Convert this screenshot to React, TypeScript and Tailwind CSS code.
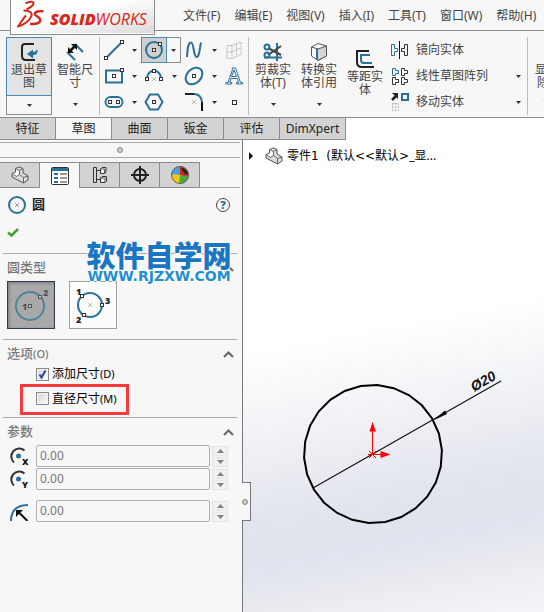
import React from "react";

const BLUE = "#2a7199";
const DARK = "#333333";

type SvgProps = { w: number; h: number; children: React.ReactNode; className?: string };

function Svg({ w, h, children, className }: SvgProps) {
  return (
    <svg width={w} height={h} viewBox={`0 0 ${w} ${h}`} fill="none" className={`shrink-0 ${className ?? ""}`} aria-hidden="true">
      {children}
    </svg>
  );
}

function Node({ x, y }: { x: number; y: number }) {
  return <rect x={x - 1.5} y={y - 1.5} width="3" height="3" fill="#fff" stroke={DARK} />;
}

function Caret() {
  return (
    <Svg w={5} h={3}>
      <path d="M0 0h5L2.500 3z" fill="#333" />
    </Svg>
  );
}

function PartIcon() {
  return (
    <Svg w={18} h={18}>
      <path d="M1 7.500 4.500 6V2.500L8 1l4 1.500V7l5 3v4l-4.500 3L1 11z" fill="#dcdcdc" stroke="#555" strokeLinejoin="round" />
      <path d="m5 3 3.500 1.500L12 2.500M8.500 4.500v4l4 3 4.500-1.500M12.500 11.500V17M8.500 8.500l-3 2L1 7.500" stroke="#666" />
      <path d="m5 3.500 3 1.500v3L5.500 9.500 2.500 8 5 6.500z" fill="#fff" opacity=".8" />
    </Svg>
  );
}

/* ---------- menu ---------- */

function Logo() {
  return (
    <div className="absolute top-0 left-[10px] flex h-[35px] w-[145px] items-center border border-t-0 border-[#8c8c8c] bg-linear-to-br from-white from-40% to-[#d9d9d9] pl-1.5 shadow-[inset_0_-1px_0_#fff]">
      <Svg w={27} h={30} className="mb-1">
        <path d="M8.500 3.200C12 1.800 17 1 16.500 3.200 16 5.500 12.500 8 9.500 9.300" stroke="#d8261c" strokeWidth="2" />
        <path d="M6.500 10.500C11 10.500 15.500 12 14.500 15.500 13 20.500 7 25 1 26.500 3.500 24 4.500 20 9 15.500" stroke="#d8261c" strokeWidth="2" strokeLinejoin="round" />
        <path d="M26.500 11.200C22.500 10.800 18 11.500 17.800 13.800 17.600 16 24 17.500 23.300 20.500 22.800 23.500 18 24.500 13 23.700" stroke="#d8261c" strokeWidth="2.400" />
      </Svg>
      <span className="ml-1.5 pt-1 font-['Open_Sans',sans-serif] text-base leading-4 text-[#d8261c] italic">
        <b className="font-extrabold">SOLID</b>
        <span>WORKS</span>
      </span>
    </div>
  );
}

const menus = ["文件(F)", "编辑(E)", "视图(V)", "插入(I)", "工具(T)", "窗口(W)", "帮助(H)"];

function MenuBar() {
  return (
    <header className="relative flex h-[31px] items-center border-b border-[#8c8c8c] pl-[183px]">
      <Logo />
      <nav className="flex gap-[14px] pt-0.5">
        {menus.map((m) => (
          <button key={m} type="button" className="leading-4 whitespace-nowrap">{m}</button>
        ))}
      </nav>
    </header>
  );
}

/* ---------- ribbon ---------- */

function BigTool({ icon, lines, caret = true }: { icon?: React.ReactNode; lines: string[]; caret?: boolean }) {
  return (
    <button type="button" className={`flex h-[78px] w-[46px] shrink-0 flex-col items-center ${caret ? "pt-1" : "pt-[11px]"}`}>
      <span className="flex h-[22px] shrink-0 items-center">{icon}</span>
      {lines.map((l) => (
        <span key={l} className="leading-[13px] whitespace-nowrap">{l}</span>
      ))}
      {caret && <span className="mt-3.5"><Caret /></span>}
    </button>
  );
}

function Divider() {
  return <div className="h-[78px] w-px shrink-0 bg-[#bcbcbc]" />;
}

const sketchTools: { name: string; caret?: boolean; active?: boolean; art: React.ReactNode }[] = [
  { name: "直线", caret: true, art: <><path d="M2 18 17 3" stroke={BLUE} strokeWidth="2" /><Node x={2} y={18} /><Node x={18} y={2} /></> },
  { name: "圆", caret: true, active: true, art: <><circle cx="10" cy="10" r="8" stroke={BLUE} strokeWidth="2" /><Node x={10} y={10} /><Node x={16} y={4} /></> },
  { name: "样条曲线", caret: true, art: <path d="M3 17C3.500 9 4 2.500 7 2.500S9.500 17 12.500 17 15.500 9 17 2.500" stroke={BLUE} strokeWidth="2" /> },
  { name: "基准面", art: <path d="M3 5.500h5l9-3.500v12.500l-9 4H3zM8 5.500v13M12.500 4v12.500M3 12h5l9-4" stroke="#b5b5b5" strokeDasharray="2 1" /> },
  { name: "边角矩形", caret: true, art: <><path d="M2 4.500h16v12H2z" stroke={BLUE} strokeWidth="2" /><Node x={10} y={10} /><Node x={18} y={4} /></> },
  { name: "圆弧", caret: true, art: <><path d="M3 13C3 2 17 2 17 13" stroke={BLUE} strokeWidth="2" /><path d="m8 11 4 4m0-4-4 4" stroke="#bbb" /><Node x={3} y={13} /><Node x={17} y={13} /><Node x={10} y={5} /></> },
  { name: "椭圆", caret: true, art: <><ellipse cx="10" cy="10" rx="9.500" ry="7" transform="rotate(-45 10 10)" stroke={BLUE} strokeWidth="2" /><Node x={10} y={10} /></> },
  { name: "文字", art: <path d="M8 2h3.500l5 14.500h2v1.500h-6v-1.500h2l-1.200-4H7l-1.200 4h2v1.500h-6v-1.500h2.200L8.500 3.500zM7.500 10.500h5L10 4z" stroke={BLUE} /> },
  { name: "直槽口", caret: true, art: <><rect x="1.500" y="5" width="17" height="10" rx="5" stroke={BLUE} strokeWidth="2" /><Node x={6} y={10} /><Node x={14} y={10} /></> },
  { name: "多边形", art: <><path d="M6 2.500h8l4.500 7.500L14 17.500H6L1.500 10z" stroke={BLUE} strokeWidth="2" /><Node x={10} y={10} /></> },
  { name: "圆角", caret: true, art: <><path d="M1 2h9" stroke="#222" strokeWidth="2" /><path d="M10 2q7 0 8 8" stroke={BLUE} strokeWidth="2" /><path d="M18 10v9" stroke="#111" strokeWidth="2" /><path d="m8 8 4 4m0-4-4 4" stroke="#bbb" /></> },
  { name: "点", art: <rect x="8.500" y="8.500" width="4" height="4" stroke={DARK} fill="#fff" /> },
];

function SketchGrid() {
  return (
    <div className="grid w-[148px] shrink-0 grid-cols-[40px_40px_40px_27px] grid-rows-3 pl-px">
      {sketchTools.map((t) => (
        <div key={t.name} className="flex h-[26px]">
          <button
            type="button"
            aria-label={t.name}
            className={`flex w-[26px] items-center justify-center ${t.active ? "border border-[#4a8bb5] bg-[#d0d0d0]" : ""}`}
          >
            <Svg w={20} h={20}>{t.art}</Svg>
          </button>
          {t.caret && (
            <button
              type="button"
              aria-label={`${t.name}选项`}
              className={`flex w-[14px] items-center justify-center ${t.active ? "border border-l-0 border-[#8c8c8c]" : ""}`}
            >
              <Caret />
            </button>
          )}
        </div>
      ))}
    </div>
  );
}

const patternTools = [
  {
    label: "镜向实体",
    caret: false,
    art: <><path d="M1.500 4.500h3v4h3v3h-3v4h-3z" stroke={BLUE} /><path d="M9.500 1v18" stroke="#111" /><path d="M17.500 4.500h-3v4h-3v3h3v4h3z" stroke={DARK} /></>,
  },
  {
    label: "线性草图阵列",
    caret: true,
    art: <><path d="M2.500 2.500h3v2h3v3h-3v2h-3z" stroke={BLUE} /><path d="M11.500 2.500h3v2h3v3h-3v2h-3zM2.500 11.500h3v2h3v3h-3v2h-3zM11.500 11.500h3v2h3v3h-3v2h-3z" stroke={DARK} /></>,
  },
  {
    label: "移动实体",
    caret: true,
    art: <><path d="m2 8 5-5" stroke="#222" strokeWidth="2.500" /><path d="M2 1h6v6z" fill="#222" /><rect x="12" y="2" width="6" height="6" stroke={BLUE} strokeWidth="2" /><path d="M2.500 11.500h6v7h-6zM5.500 11v8M2 15h7" stroke="#bbb" strokeDasharray="2 1" /></>,
  },
];

function Ribbon() {
  return (
    <div className="flex h-[87px] items-start overflow-hidden border-b border-[#8c8c8c] pt-1.5 pl-1.5">
      <div className="flex h-[78px] w-[46px] shrink-0 flex-col">
        <button type="button" className="flex h-[59px] flex-col items-center border border-[#4a8bb5] bg-[#e3e3e3] pt-[3px]">
          <span className="flex h-[22px] items-center">
            <Svg w={18} h={18}>
              <path d="M14 1H5Q2 1 2 4v9q0 4 4 4h9" stroke="#222" strokeWidth="2" />
              <path d="M17.500 6q.5 6.500-4.500 6v3.500L7 11l6-4.500V9q3 0 4.500-3z" fill={BLUE} />
            </Svg>
          </span>
          <span className="leading-[13px]">退出草</span>
          <span className="leading-[13px]">图</span>
        </button>
        <button type="button" aria-label="退出草图选项" className="flex h-[19px] items-center justify-center border border-t-0 border-[#8c8c8c]">
          <Caret />
        </button>
      </div>
      <BigTool
        lines={["智能尺", "寸"]}
        icon={
          <Svg w={20} h={20}>
            <path d="m10 2 8 8M2 10l8 8" stroke={BLUE} strokeWidth="2" />
            <path d="m4 10 7-7" stroke="#111" strokeWidth="2.500" />
            <path d="M6 2h6v6zM3 5v6h6z" fill="#111" />
          </Svg>
        }
      />
      <div className="w-px shrink-0" />
      <Divider />
      <SketchGrid />
      <Divider />
      <div className="w-px shrink-0" />
      <BigTool
        lines={["剪裁实", "体(T)"]}
        icon={
          <Svg w={20} h={20}>
            <path d="M14 1v18M1 15.500h18" stroke={BLUE} strokeWidth="2" />
            <path d="m5 6 13 7M5 13l13-9" stroke="#444" strokeWidth="2" />
            <circle cx="4" cy="5" r="2.500" stroke={BLUE} strokeWidth="2" />
            <circle cx="4" cy="13" r="2.500" stroke={BLUE} strokeWidth="2" />
          </Svg>
        }
      />
      <BigTool
        lines={["转换实", "体引用"]}
        icon={
          <Svg w={18} h={20}>
            <path d="M1.500 5 8 1.500 16.500 4v10L8 18.500 1.500 14z" fill="#fafafa" stroke="#555" />
            <path d="M8 7l8.500-3v10L8 18.500z" fill="#d4d4d4" />
            <path d="M1.500 5 8 7l8.500-3v10L8 18.500" stroke="#555" />
            <path d="M7 7v11" stroke={BLUE} strokeWidth="2" />
          </Svg>
        }
      />
      <BigTool
        caret={false}
        lines={["等距实", "体"]}
        icon={
          <Svg w={18} h={18}>
            <path d="M13 1H1v11q0 5 5 5h12" stroke="#222" strokeWidth="2" />
            <path d="M14 5H5v5q0 3 3 3h8" stroke={BLUE} strokeWidth="2" />
          </Svg>
        }
      />
      <div className="flex w-[139px] shrink-0 flex-col pl-0.5">
        {patternTools.map((t) => (
          <button key={t.label} type="button" className="flex h-[26px] items-center gap-1.5 pr-1.5">
            <Svg w={20} h={20}>{t.art}</Svg>
            <span className="flex-1 text-left whitespace-nowrap">{t.label}</span>
            {t.caret && <Caret />}
          </button>
        ))}
      </div>
      <Divider />
      <div className="w-1 shrink-0" />
      <BigTool lines={["显示/删", "除几何", "关系"]} />
    </div>
  );
}

function RibbonTabs() {
  const tabs = ["特征", "草图", "曲面", "钣金", "评估", "DimXpert"];
  return (
    <div className="flex h-[22px] bg-white">
      {tabs.map((t) => {
        const active = t === "草图";
        return (
          <button
            key={t}
            type="button"
            className={`h-[22px] border-r border-b border-[#8c8c8c] text-[#222] ${t === "DimXpert" ? "w-[66px]" : "w-14"} ${active ? "bg-[#f7f7f7]" : "bg-[#d3d3d3]"}`}
          >
            {t}
          </button>
        );
      })}
    </div>
  );
}

/* ---------- property panel ---------- */

function PanelTabs() {
  const tabs: { name: string; art: React.ReactNode }[] = [
    { name: "特征树", art: <PartIcon /> },
    {
      name: "属性",
      art: (
        <Svg w={18} h={18}>
          <rect x=".5" y=".5" width="17" height="17" rx="1" fill="#fff" stroke="#333" />
          <path d="M1 1h16v3H1z" fill={BLUE} />
          <path d="M3 7h4M3 11h4M3 15h4" stroke={BLUE} strokeWidth="2" />
          <path d="M9 7h7M9 11h7M9 15h7" stroke="#333" />
        </Svg>
      ),
    },
    {
      name: "配置",
      art: (
        <Svg w={16} h={18}>
          <path d="M1.500 1.500h3v15h-3zM5 4.500h4M5 13.500h4" stroke="#333" />
          <path d="m8.500 3 1.500-1.500h4V6l-1.500 1.500h-4zM8.500 12l1.500-1.500h4.500V15L13 16.500H8.500z" fill="#eee" stroke="#333" />
          <path d="M8.500 3h4v4.500M8.500 12H13v4.500" stroke="#555" />
        </Svg>
      ),
    },
    {
      name: "尺寸专家",
      art: (
        <Svg w={18} h={18}>
          <circle cx="9" cy="9" r="6" stroke="#222" strokeWidth="2" />
          <path d="M9 0v18M0 9h18" stroke="#222" strokeWidth="2" />
        </Svg>
      ),
    },
    {
      name: "外观",
      art: (
        <Svg w={18} h={18}>
          <path d="M9 9V0a9 9 0 0 0-9 9q4-1 9 0z" fill="#4b9fd4" />
          <path d="M9 9V0a9 9 0 0 1 9 9q-4 2-9 0z" fill="#d5261e" />
          <path d="M0 9q4-1 9 0l-1 9Q1 17 0 9z" fill="#ecc81c" />
          <path d="M9 9q5 2 9 0-1 9-10 9z" fill="#4caa3c" />
          <path d="M10 1.500q7 1 7 8-5-2-7-8z" fill="#222" />
          <circle cx="9" cy="9" r="8.500" stroke="#666" />
        </Svg>
      ),
    },
  ];
  return (
    <div className="mt-1 mr-0.5 flex h-[26px] border-b border-[#aaa]">
      {tabs.map((t) => (
        <button
          key={t.name}
          type="button"
          aria-label={t.name}
          className={`flex h-[26px] w-10 items-center justify-center border-t border-r border-[#8c8c8c] ${t.name === "属性" ? "bg-[#f7f7f7]" : "border-b bg-[#d3d3d3]"}`}
        >
          {t.art}
        </button>
      ))}
    </div>
  );
}

function Section({ title, suffix, children }: { title: string; suffix?: string; children: React.ReactNode }) {
  return (
    <section className="mr-[5px] ml-[3px] border-t border-[#aaa]">
      <button type="button" className="flex h-[26px] w-full items-center justify-between pt-0.5 pr-[3px] pl-1 text-[#777]">
        <span className="text-[13px] font-medium">
          {title}
          {suffix && <span className="text-[11px]">{suffix}</span>}
        </span>
        <Svg w={11} h={7}>
          <path d="m1 6 4.500-4.500L10 6" stroke="#666" strokeWidth="2" />
        </Svg>
      </button>
      {children}
    </section>
  );
}

function Check({ label, suffix, checked }: { label: string; suffix: string; checked?: boolean }) {
  return (
    <label className="flex h-4 items-center gap-[3px] text-black">
      <span className="relative flex">
        <input
          type="checkbox"
          defaultChecked={checked}
          className="peer size-[13px] appearance-none border border-[#8a8a8a] bg-linear-to-br from-[#cfd3d8] to-white shadow-[inset_0_0_0_1px_#f4f4f4]"
        />
        <svg viewBox="0 0 13 13" fill="none" className="pointer-events-none absolute inset-0 hidden size-[13px] peer-checked:block">
          <path d="m3.500 6.500 2 3 4-7" stroke="#2d4494" strokeWidth="2" />
        </svg>
      </span>
      <span className="leading-4">{label}<span className="text-[11px]">{suffix}</span></span>
    </label>
  );
}

function NumberRow({ name, icon, className }: { name: string; icon: React.ReactNode; className?: string }) {
  return (
    <div className={`flex h-[22px] items-center pl-[7px] ${className ?? ""}`}>
      <span className="flex w-[26px] shrink-0 pt-px">{icon}</span>
      <input
        aria-label={name}
        defaultValue="0.00"
        className="h-[22px] min-w-0 flex-1 rounded-[2px] border border-[#b0b0b0] bg-[#f7f7f7] px-[3px] pb-0.5 text-[#777] outline-none"
      />
      <span className="mr-[9px] ml-0.5 flex h-[21px] w-4 flex-col gap-px">
        <button type="button" aria-label={`${name}增加`} className="flex flex-1 items-center justify-center border border-[#e4e4e4] bg-[#f1f1f1]">
          <Svg w={7} h={4}><path d="M0 4h7L3.500 0z" fill="#808080" /></Svg>
        </button>
        <button type="button" aria-label={`${name}减少`} className="flex flex-1 items-center justify-center border border-[#e4e4e4] bg-[#f1f1f1]">
          <Svg w={7} h={4}><path d="M0 0h7L3.500 4z" fill="#808080" /></Svg>
        </button>
      </span>
    </div>
  );
}

function CenterIcon({ axis }: { axis: "X" | "Y" }) {
  return (
    <Svg w={19} h={19}>
      <path d="M4 15.500A7.500 7.500 0 0 1 14.500 3.500" stroke="#333" strokeWidth="2" />
      <circle cx="8.500" cy="9" r="2.500" fill={BLUE} />
      <text x="12" y="18" className="font-['Open_Sans',sans-serif] text-[9px] font-extrabold" fill="#111">{axis}</text>
    </Svg>
  );
}

function PropertyPanel() {
  const digit = "font-['Open_Sans',sans-serif] text-[9px] font-extrabold";
  return (
    <aside className="relative flex w-[243px] shrink-0 flex-col border-r border-[#777] bg-[#f7f7f7]">
      <div className="mt-0.5 mr-0.5 flex h-4 items-center justify-center border-y border-[#aaa]">
        <span className="size-1.5 rounded-full border border-[#888] bg-[#ccc]" />
      </div>
      <PanelTabs />
      <div className="flex h-[34px] items-center pr-3 pl-2">
        <Svg w={18} h={18}>
          <circle cx="9" cy="9" r="8" stroke={BLUE} strokeWidth="2" />
          <path d="m7 7 4 4m0-4-4 4" stroke="#999" />
        </Svg>
        <h1 className="ml-1.5 flex-1 text-[13px] font-bold text-[#222]">圆</h1>
        <button type="button" aria-label="帮助" className="flex size-[14px] items-center justify-center rounded-full border border-[#444] font-['Open_Sans',sans-serif] text-[11px] leading-3 font-extrabold text-[#2a7199]">
          ?
        </button>
      </div>
      <button type="button" aria-label="确定" className="mb-[11px] ml-[7px] flex h-5 w-3 items-center">
        <Svg w={12} h={9}>
          <path d="m1 4.500 3.500 3L11 1" stroke="#3fa32a" strokeWidth="2.500" />
        </Svg>
      </button>

      <Section title="圆类型">
        <div className="mb-2.5 flex gap-[14px] pt-px pl-1">
          <button type="button" aria-label="圆" aria-pressed="true" className="size-12 border border-[#2f3d4a] bg-[#a9a9a9] shadow-[inset_1px_1px_3px_#777]">
            <Svg w={46} h={46}>
              <circle cx="22" cy="24" r="14" stroke="#4f83a0" strokeWidth="2" />
              <rect x="20.500" y="22.500" width="3" height="3" stroke="#555" fill="#bbb" />
              <rect x="30.500" y="13.500" width="3" height="3" stroke="#555" fill="#bbb" />
              <text x="14" y="28" className={digit} fill="#555">1</text>
              <text x="35" y="14" className={digit} fill="#555">2</text>
            </Svg>
          </button>
          <button type="button" aria-label="周边圆" aria-pressed="false" className="size-12 border border-[#a0a0a0] bg-[#fcfcfc]">
            <Svg w={46} h={46}>
              <circle cx="20" cy="23" r="12" stroke={BLUE} strokeWidth="2" />
              <path d="m18 21 4 4m0-4-4 4" stroke="#bbb" />
              <Node x={12} y={14} />
              <Node x={32} y={23} />
              <Node x={14} y={33} />
              <text x="6" y="13" className={digit} fill="#222">1</text>
              <text x="35" y="22" className={digit} fill="#222">3</text>
              <text x="6" y="41" className={digit} fill="#222">2</text>
            </Svg>
          </button>
        </div>
      </Section>

      <Section title="选项" suffix="(O)">
        <div className="pl-[33px]"><Check label="添加尺寸" suffix="(D)" checked /></div>
        <div className="mt-0.5 mb-0.5 ml-[17px] flex h-[31px] w-[109px] items-center border-3 border-[#f93a3d] pb-0.5 pl-[13px]">
          <Check label="直径尺寸" suffix="(M)" />
        </div>
      </Section>

      <Section title="参数">
        <NumberRow name="X 坐标" icon={<CenterIcon axis="X" />} className="mt-px" />
        <NumberRow name="Y 坐标" icon={<CenterIcon axis="Y" />} className="mt-px" />
        <NumberRow
          name="半径"
          className="mt-2.5"
          icon={
            <Svg w={19} h={19}>
              <path d="M1 19Q1 3 18 3" stroke={BLUE} strokeWidth="2" />
              <path d="m17.500 19-8-8" stroke="#111" strokeWidth="2" />
              <path d="M6 8h7l-7 7z" fill="#111" />
            </Svg>
          }
        />
      </Section>

      <div className="absolute top-[101px] left-[86px] w-[146px] text-center whitespace-nowrap text-[#1a75c2] [text-shadow:1px_0_#fff,-1px_0_#fff,0_1px_#fff,0_-1px_#fff]">
        <p className="text-[29px] leading-[30px] font-black">软件自学网</p>
        <p className="font-['DejaVu_Sans',sans-serif] text-sm leading-[11px] font-bold text-[#1e8fd0]">WWW.RJZXW.COM</p>
      </div>

      <button type="button" aria-label="折叠面板" className="absolute top-[342px] -right-[9px] flex h-[39px] w-[9px] items-center border border-l-0 border-[#777] bg-[#f7f7f7]">
        <span className="size-1.5 rounded-full border border-[#888] bg-[#ccc]" />
      </button>
    </aside>
  );
}

/* ---------- drawing area ---------- */

const SIDES = 26;
const outline = Array.from({ length: SIDES }, (_, i) => {
  const a = 0.063 + (i * 2 * Math.PI) / SIDES;
  return `${(70 + 69 * Math.sin(a)).toFixed(1)},${(84 - 69 * Math.cos(a)).toFixed(1)}`;
}).join(" ");

function Canvas() {
  return (
    <main className="min-w-0 flex-1 bg-[linear-gradient(169deg,#fff_0%,#fff_40%,#f0f1f5_58%,#e0e4ed_74%,#e1e4ee_82%,#e9ebf0_89%,#f4f5f9_100%)]">
      <div className="flex h-8 items-center pl-1.5 text-black">
        <Svg w={4} h={8}><path d="M0 0v8l4-4z" fill="#111" /></Svg>
        <span className="ml-3 flex"><PartIcon /></span>
        <span className="ml-1 font-['DejaVu_Sans','Noto_Sans_CJK_SC',sans-serif] whitespace-pre">
          零件1  (默认&lt;&lt;默认&gt;<span className="font-['Noto_Sans','Noto_Sans_CJK_SC',sans-serif]">_显...</span>
        </span>
      </div>
      <svg width="200" height="160" viewBox="0 0 200 160" fill="none" className="mt-[198px] ml-[60px] block" role="img" aria-label="直径 20 的圆">
        <polygon points={outline} stroke="#000" strokeWidth="2" />
        <path d="M10 118 198 11" stroke="#111" strokeWidth="1.200" />
        <path d="M130 50.500 142 40.500 144 44z" fill="#000" />
        <text transform="translate(171 22) rotate(-30)" className="font-['Liberation_Sans',sans-serif] text-sm font-bold italic" fill="#111">Ø20</text>
        <path d="M69.500 84V60M70 84.500h10M66 81l7 7m0-7-7 7M65 84.500h5" stroke="#f00" />
        <path d="M66.500 61.500 69.500 52l3.500 9.500zM77.500 81v7l10-3.500z" fill="#f00" />
      </svg>
    </main>
  );
}

export default function App() {
  return (
    <div className="flex min-h-screen flex-col bg-[#f7f7f7] font-['Noto_Sans','Noto_Sans_CJK_SC',sans-serif] text-xs text-[#444]">
      <MenuBar />
      <Ribbon />
      <RibbonTabs />
      <div className="flex flex-1">
        <PropertyPanel />
        <Canvas />
      </div>
    </div>
  );
}
